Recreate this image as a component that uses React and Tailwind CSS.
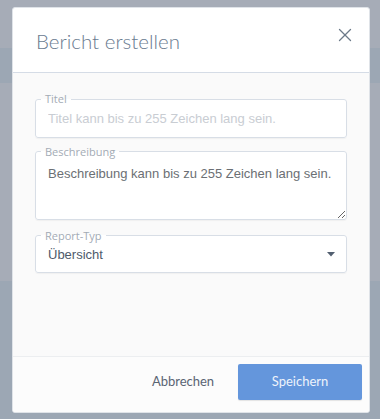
import React from "react";
import { X } from "lucide-react";

const ui = { fontFamily: 'Lato, "Open Sans", sans-serif' };
const label = { fontFamily: '"Open Sans", "Noto Sans", sans-serif' };
const arial = { fontFamily: '"Liberation Sans", Arial, sans-serif' };

function Field({ title, children, className = "" }) {
  return (
    <fieldset className={`border border-[#d8dee6] rounded-[3px] bg-white shadow-[0_1px_1px_rgba(0,0,0,0.04)] ${className}`}>
      <legend style={label} className="ml-[5px] px-[4px] text-[11px] leading-[12px] text-[#a3abb5]">
        {title}
      </legend>
      {children}
    </fieldset>
  );
}

export default function App() {
  return (
    <div className="relative w-[380px] h-[419px] overflow-hidden">
      {/* app behind the overlay */}
      <div className="flex flex-col h-full">
        <div className="h-[48px] bg-[#a6acb7]" />
        <div className="h-[35px] bg-[#9ca7b4]" />
        <div className="h-[198px] bg-[#a6acb7]" />
        <div className="flex-1 bg-[#9ca7b4]" />
      </div>

      <div className="absolute left-[12px] top-[7px] w-[358px] h-[406px] flex flex-col bg-white border border-[#dfe3e8] rounded-[3px] overflow-hidden">
        <div className="h-[65px] flex items-center justify-between pl-[23px] pr-[13px] pt-[3px] border-b border-[#d5dce6]">
          <h2 style={ui} className="text-[20.5px] font-light text-[#6a7b90]">Bericht erstellen</h2>
          <X className="w-[22px] h-[22px] text-[#6c7a89] -mt-[14px]" strokeWidth={1.4} />
        </div>

        <div className="flex-1 bg-[#fafafa] px-[22px] pt-[20px] flex flex-col">
          <Field title="Titel">
            <input
              style={arial}
              placeholder="Titel kann bis zu 255 Zeichen lang sein."
              className="w-full h-[24px] px-[12px] mb-[6px] text-[13px] text-[#6b6f74] placeholder:text-[#c9cdd3] outline-none bg-transparent"
            />
          </Field>

          <Field title="Beschreibung" className="mt-[8px]">
            <textarea
              style={arial}
              defaultValue="Beschreibung kann bis zu 255 Zeichen lang sein."
              className="block w-full h-[61px] px-[12px] pt-[6px] text-[13px] leading-[20px] text-[#6b6f74] outline-none bg-transparent resize-y"
            />
          </Field>

          <Field title="Report-Typ" className="mt-[10px]">
            <div className="flex items-center justify-between h-[26px] pl-[12px] pr-[11px] mb-[4px]">
              <span style={arial} className="text-[13px] text-[#4d5a6b]">Übersicht</span>
              <svg width="8" height="5" viewBox="0 0 8 5">
                <path d="M0 0h8L4 4.5z" fill="#525f70" />
              </svg>
            </div>
          </Field>
        </div>

        <div className="h-[56px] flex justify-end items-start gap-2 pt-[7px] pr-[7px] bg-[#fcfcfc] border-t border-[#eceef0]">
          <button style={ui} className="w-[94px] h-[36px] text-[13px] text-[#5a6473]">Abbrechen</button>
          <button style={ui} className="w-[124px] h-[36px] rounded-[2px] bg-[#6496dc] text-[13px] text-[#eef3fb] shadow-[0_1px_1px_rgba(0,0,0,0.1)]">
            Speichern
          </button>
        </div>
      </div>
    </div>
  );
}
